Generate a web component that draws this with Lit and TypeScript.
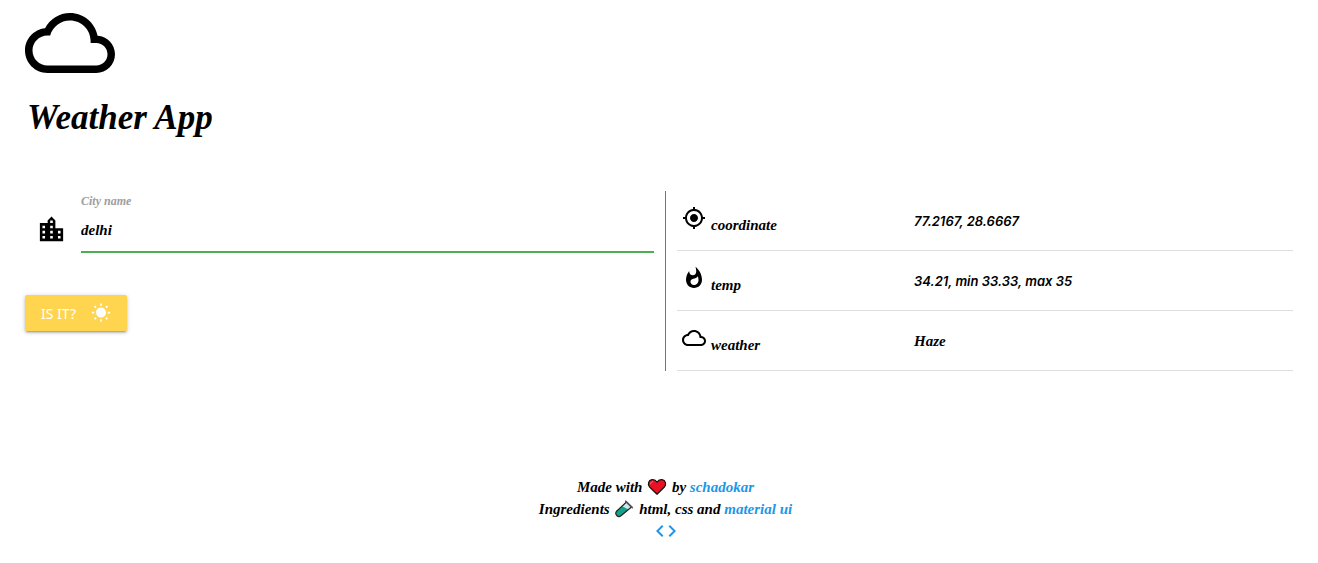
import { LitElement, html, css, svg } from "lit";
import { customElement, property, state } from "lit/decorators.js";

const CLOUD = "M19.35 10.04C18.67 6.59 15.64 4 12 4 9.11 4 6.6 5.64 5.35 8.04 2.34 8.36 0 10.91 0 14c0 3.31 2.69 6 6 6h13c2.76 0 5-2.24 5-5 0-2.64-2.05-4.78-4.65-4.96zM19 18H6c-2.21 0-4-1.79-4-4s1.79-4 4-4h.71C7.37 7.69 9.48 6 12 6c3.04 0 5.5 2.46 5.5 5.5v.5H19c1.66 0 3 1.34 3 3s-1.34 3-3 3z";

const ICONS: Record<string, string> = {
  cloud: CLOUD,
  city: "M15 11V5l-3-3-3 3v2H3v14h18V11h-6zm-8 8H5v-2h2v2zm0-4H5v-2h2v2zm0-4H5V9h2v2zm6 8h-2v-2h2v2zm0-4h-2v-2h2v2zm0-4h-2V9h2v2zm0-4h-2V5h2v2zm6 12h-2v-2h2v2zm0-4h-2v-2h2v2z",
  location: "M12 8c-2.21 0-4 1.79-4 4s1.79 4 4 4 4-1.79 4-4-1.79-4-4-4zm8.94 3c-.46-4.17-3.77-7.48-7.94-7.94V1h-2v2.06C6.83 3.52 3.52 6.83 3.06 11H1v2h2.06c.46 4.17 3.77 7.48 7.94 7.94V23h2v-2.06c4.17-.46 7.48-3.77 7.94-7.94H23v-2h-2.06zM12 19c-3.87 0-7-3.13-7-7s3.13-7 7-7 7 3.13 7 7-3.13 7-7 7z",
  fire: "M13.5.67s.74 2.65.74 4.8c0 2.06-1.35 3.73-3.41 3.73-2.07 0-3.63-1.67-3.63-3.73l.03-.36C5.21 7.51 4 10.62 4 14c0 4.42 3.58 8 8 8s8-3.58 8-8C20 8.61 17.41 3.8 13.5.67zM11.71 19c-1.78 0-3.22-1.4-3.22-3.14 0-1.62 1.05-2.76 2.81-3.12 1.77-.36 3.6-1.21 4.62-2.58.39 1.29.59 2.65.59 4.04 0 2.65-2.15 4.8-4.8 4.8z",
  sun: "M6.76 4.84l-1.8-1.79-1.41 1.41 1.79 1.79 1.42-1.41zM4 10.5H1v2h3v-2zm9-9.95h-2V3.5h2V.55zm7.45 3.91l-1.41-1.41-1.79 1.79 1.41 1.41 1.79-1.79zm-3.21 13.7l1.79 1.8 1.41-1.41-1.8-1.79-1.4 1.4zM20 10.5v2h3v-2h-3zm-8-5c-3.31 0-6 2.69-6 6s2.69 6 6 6 6-2.69 6-6-2.69-6-6-6zm-1 16.95h2V19.5h-2v2.95zm-7.45-3.91l1.41 1.41 1.79-1.8-1.41-1.41-1.79 1.8z",
  code: "M9.4 16.6L4.8 12l4.6-4.6L8 6l-6 6 6 6 1.4-1.4zm5.2 0l4.6-4.6-4.6-4.6L16 6l6 6-6 6-1.4-1.4z",
};

@customElement("app-icon")
export class AppIcon extends LitElement {
  @property() name = "cloud";

  static styles = css`
    :host { display: inline-block; width: 24px; height: 24px; }
    .glyph { display: block; width: 100%; height: 100%; fill: currentColor; }
  `;

  render() {
    return html`<svg class="glyph" viewBox="0 0 24 24" aria-hidden="true">${svg`<path d=${ICONS[this.name]} />`}</svg>`;
  }
}

@customElement("app-root")
export class AppRoot extends LitElement {
  @state() private city = "delhi";

  private readings = [
    { icon: "location", label: "coordinate", value: "77.2167, 28.6667", numeric: true },
    { icon: "fire", label: "temp", value: "34.21, min 33.33, max 35", numeric: true },
    { icon: "cloud", label: "weather", value: "Haze", numeric: false },
  ];

  static styles = css`
    :host {
      display: block;
      color: #000;
      font-family: "Liberation Serif", serif;
      font-size: 15px;
      font-style: italic;
      font-weight: 700;
      line-height: 22px;
    }
    * { box-sizing: border-box; }
    .header { padding: 0 25px; }
    .logo { display: block; width: 90px; height: 88px; }
    .logo::part(glyph) { height: 90px; margin-top: -2px; }
    .title { margin: 8px 0 0; padding-left: 2px; font-size: 35px; line-height: 44px; font-weight: 700; }
    .panels { display: grid; grid-template-columns: 640fr 628fr; padding: 0 25px; margin-top: 51px; }
    .form { padding-right: 11px; }
    .field { display: grid; grid-template-columns: 56px 1fr; align-items: center; }
    .city-icon { width: 31px; height: 31px; margin: 14px 0 0 11px; }
    .box { display: flex; flex-direction: column; }
    .label { color: #9e9e9e; font-size: 12px; line-height: 20px; }
    .input {
      width: 100%;
      height: 42px;
      padding: 0 0 2px;
      border: 0;
      border-bottom: 2px solid #4caf50;
      outline: 0;
      background: transparent;
      color: inherit;
      font: inherit;
    }
    .button {
      display: flex;
      align-items: center;
      gap: 15px;
      height: 36px;
      margin-top: 42px;
      padding: 0 16px;
      border: 0;
      border-radius: 2px;
      background: #ffd54f;
      color: #fff;
      font: 400 14px "Noto Sans", sans-serif;
      box-shadow: 0 2px 2px rgba(0, 0, 0, .14), 0 3px 1px -2px rgba(0, 0, 0, .12), 0 1px 5px rgba(0, 0, 0, .2);
      cursor: pointer;
    }
    .sun { width: 20px; height: 20px; }
    .result { border-left: 1px solid #757575; padding-left: 11px; }
    .table { width: 100%; border-collapse: separate; border-spacing: 0; table-layout: fixed; }
    .name, .value {
      height: 60px;
      padding: 0 5px;
      border-bottom: 1px solid #dedede;
      text-align: left;
      vertical-align: middle;
      font-weight: 700;
      font-size: 15px;
    }
    .name { width: 232px; }
    .row-icon { margin-right: 5px; vertical-align: baseline; }
    .numeric { font-family: Inter, sans-serif; font-size: 13px; font-weight: 600; }
    .footer { margin-top: 105px; padding-left: 13px; text-align: center; }
    .line { margin: 0; }
    .link { color: #1e96e8; text-decoration: none; }
    .emoji { width: 20px; height: 18px; margin: 0 1px; vertical-align: -4px; }
    .code { display: block; margin: -1px auto 0; }
  `;

  render() {
    return html`
      <header class="header">
        <svg class="logo" viewBox="0 0.500 24 23.500" preserveAspectRatio="none" aria-hidden="true"><path d=${CLOUD} /></svg>
        <h1 class="title">Weather App</h1>
      </header>
      <main class="panels">
        <form class="form" @submit=${(e: Event) => e.preventDefault()}>
          <div class="field">
            <app-icon class="city-icon" name="city"></app-icon>
            <div class="box">
              <label class="label" for="city">City name</label>
              <input class="input" id="city" type="text" .value=${this.city}
                @input=${(e: Event) => (this.city = (e.target as HTMLInputElement).value)} />
            </div>
          </div>
          <button class="button" type="submit">IS IT?<app-icon class="sun" name="sun"></app-icon></button>
        </form>
        <section class="result">
          <table class="table">
            <tbody>
              ${this.readings.map((r) => html`
                <tr>
                  <th class="name" scope="row"><app-icon class="row-icon" name=${r.icon}></app-icon>${r.label}</th>
                  <td class="value ${r.numeric ? "numeric" : ""}">${r.value}</td>
                </tr>`)}
            </tbody>
          </table>
        </section>
      </main>
      <footer class="footer">
        <p class="line">Made with
          <svg class="emoji" viewBox="0 0 20 18" role="img" aria-label="love">
            <path d="M10 16.2 2.6 9C.4 6.500 1.200 2.200 5 1.700 7.200 1.400 9 2.500 10 4.200 11 2.500 12.800 1.400 15 1.700 18.800 2.200 19.600 6.500 17.400 9Z" fill="#e81224" stroke="#111" stroke-width="1.200" stroke-linejoin="round" />
            <path d="M3.600 6.200C3.600 4.600 4.800 3.600 6.200 3.700" fill="none" stroke="#f4737e" stroke-width="1" />
          </svg>
          by <a class="link" href="#schadokar">schadokar</a></p>
        <p class="line">Ingredients
          <svg class="emoji" viewBox="0 0 20 18" role="img" aria-label="test tube">
            <path d="M12.500 2 17.500 7 7 15.800C4 18 .3 14.300 2.500 11.300Z" fill="#c9e8f3" />
            <path d="M8.300 6.200 14.500 9.500 7 15.800C4 18 .3 14.300 2.500 11.300Z" fill="#12a388" />
            <path d="M12.500 2 17.500 7 7 15.800C4 18 .3 14.300 2.500 11.300Z" fill="none" stroke="#222" stroke-width="1.200" stroke-linejoin="round" />
            <path d="M11.700 1.200 18.300 7.600" stroke="#555" stroke-width="1.600" stroke-linecap="round" />
          </svg>
          html, css and <a class="link" href="#material-ui">material ui</a></p>
        <a class="link" href="#source" aria-label="Source code"><app-icon class="code" name="code"></app-icon></a>
      </footer>
    `;
  }
}
